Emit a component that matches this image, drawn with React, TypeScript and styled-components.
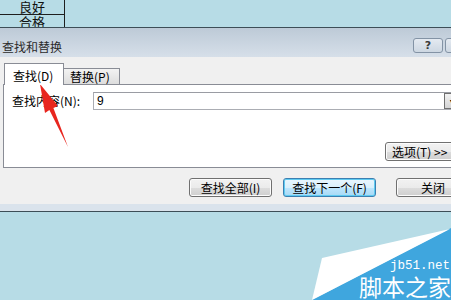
import React from 'react'
import styled, { createGlobalStyle } from 'styled-components'

const GlobalStyle = createGlobalStyle`
  html, body { margin: 0; padding: 0; }
  body { background: #b7dce6; }
`

const cjk = `"Noto Sans CJK SC", "Noto Sans", sans-serif`

const Screen = styled.div`
  position: relative;
  width: 451px;
  height: 300px;
  overflow: hidden;
  background: #b7dce6;
  font-family: ${cjk};
  font-size: 12px;
  color: #000;
`

const Sheet = styled.div`
  width: 64px;
  height: 27px;
  border-right: 1px solid #1e1e1e;
  display: flex;
  flex-direction: column;
`

const Cell = styled.div<{ $h: number; $line?: boolean }>`
  height: ${p => p.$h}px;
  border-bottom: ${p => (p.$line ? '1px solid #1e1e1e' : 'none')};
  overflow: hidden;
  text-align: center;
  font-size: 13px;
  line-height: 14px;
  color: #111;
`

const Dialog = styled.div`
  width: 475px;
  border-top: 1px solid #3d4e57;
  border-bottom: 1px solid #3d4e57;
  display: flex;
  flex-direction: column;
`

const TitleBar = styled.div`
  height: 29px;
  box-sizing: border-box;
  padding: 0 0 4px 2px;
  display: flex;
  align-items: flex-end;
  background: linear-gradient(#bdcad7, #d6dfe9);
  color: #2b2b2b;
`

const Title = styled.span`
  flex: 1;
  line-height: 13px;
`

const CapButton = styled.div<{ $w: number }>`
  width: ${p => p.$w}px;
  height: 15px;
  box-sizing: border-box;
  margin-left: 2px;
  border: 1px solid #8393a5;
  border-radius: 3px;
  background: linear-gradient(#e4eaf1, #cdd7e2);
  display: flex;
  align-items: center;
  justify-content: center;
  font-family: "DejaVu Sans", sans-serif;
  font-weight: bold;
  font-size: 11px;
  color: #3a3a3a;
`

const Body = styled.div`
  height: 147px;
  box-sizing: border-box;
  padding: 6px 0 0 3px;
  background: #f0f0f0;
  display: flex;
  flex-direction: column;
`

const TabRow = styled.div`
  display: flex;
  align-items: flex-end;
  height: 22px;
  margin-bottom: -1px;
  padding-left: 1px;
  position: relative;
  z-index: 1;
`

const Tab = styled.div<{ $active?: boolean }>`
  box-sizing: border-box;
  width: ${p => (p.$active ? 60 : 56)}px;
  height: ${p => (p.$active ? 22 : 17)}px;
  border: 1px solid #898c95;
  border-left-width: ${p => (p.$active ? 1 : 0)}px;
  border-bottom: ${p => (p.$active ? 'none' : '1px solid #898c95')};
  background: ${p => (p.$active ? '#fff' : 'linear-gradient(#f3f3f3, #dddddd)')};
  display: flex;
  align-items: center;
  padding-left: ${p => (p.$active ? 8 : 6)}px;
  padding-top: ${p => (p.$active ? 2 : 0)}px;
  line-height: 12px;
`

const Panel = styled.div`
  width: 467px;
  height: 84px;
  box-sizing: border-box;
  border: 1px solid #898c95;
  background: #fff;
  padding: 7px 8px 0 8px;
  display: flex;
  flex-direction: column;
`

const FieldRow = styled.div`
  display: flex;
  align-items: center;
  height: 18px;
`

const Label = styled.span`
  width: 81px;
  line-height: 12px;
`

const Input = styled.div`
  flex: 1;
  height: 18px;
  box-sizing: border-box;
  border: 1px solid #abadb3;
  border-top-color: #9a9ca3;
  display: flex;
  align-items: center;
  padding-left: 3px;
  font-family: "Liberation Sans", sans-serif;
  font-size: 12px;
`

const InputValue = styled.span`
  flex: 1;
`

const DropButton = styled.div`
  width: 16px;
  height: 16px;
  box-sizing: border-box;
  border: 1px solid #707070;
  background: linear-gradient(#f2f2f2, #d4d4d4);
  display: flex;
  align-items: center;
  justify-content: center;
  font-size: 7px;
  color: #000;
`

const OptionsRow = styled.div`
  display: flex;
  justify-content: flex-end;
  margin-top: 32px;
`

const Button = styled.div<{ $w: number; $default?: boolean }>`
  width: ${p => p.$w}px;
  height: 19px;
  box-sizing: border-box;
  border: 1px solid ${p => (p.$default ? '#3c7fb1' : '#707070')};
  border-radius: 3px;
  background: ${p =>
    p.$default
      ? 'linear-gradient(#eaf6fd 0%, #d9f0fc 50%, #bee6fd 51%, #a7d9f5 100%)'
      : 'linear-gradient(#f2f2f2 0%, #ebebeb 50%, #dddddd 51%, #cfcfcf 100%)'};
  box-shadow: inset 0 0 0 1px ${p => (p.$default ? '#5ecbf1' : '#fcfcfc')};
  display: flex;
  align-items: center;
  justify-content: center;
  line-height: 12px;
  white-space: nowrap;
`

const OptionsButton = styled(Button)`
  justify-content: flex-start;
  padding-left: 6px;
`

const ButtonRow = styled.div`
  display: flex;
  align-items: center;
  margin-top: 10px;
  padding-left: 186px;
  gap: 11px;
`

const CloseButton = styled(Button)`
  margin-left: 9px;
`

const FooterBand = styled.div`
  height: 7px;
  background: #dae3ec;
`

const Overlay = styled.svg`
  position: absolute;
  left: 0;
  top: 0;
  pointer-events: none;
`

const Watermark = styled.div`
  position: absolute;
  right: 0;
  bottom: 0;
  width: 140px;
  height: 72px;
`

const MarkShape = styled.svg`
  position: absolute;
  left: 0;
  top: 0;
`

const MarkUrl = styled.span`
  position: absolute;
  right: 1px;
  top: 33px;
  font-family: "Liberation Mono", monospace;
  font-size: 12.5px;
  line-height: 11px;
  color: #fff;
`

const MarkName = styled.span`
  position: absolute;
  right: 0;
  bottom: 2px;
  font-family: ${cjk};
  font-size: 23px;
  line-height: 23px;
  color: #fff;
`

export default function App() {
  return (
    <Screen>
      <GlobalStyle />
      <Sheet>
        <Cell $h={14} $line>良好</Cell>
        <Cell $h={12}>合格</Cell>
      </Sheet>
      <Dialog>
        <TitleBar>
          <Title>查找和替换</Title>
          <CapButton $w={30}>?</CapButton>
          <CapButton $w={30}></CapButton>
        </TitleBar>
        <Body>
          <TabRow>
            <Tab $active>查找(D)</Tab>
            <Tab>替换(P)</Tab>
          </TabRow>
          <Panel>
            <FieldRow>
              <Label>查找内容(N):</Label>
              <Input>
                <InputValue>9</InputValue>
                <DropButton>▼</DropButton>
              </Input>
            </FieldRow>
            <OptionsRow>
              <OptionsButton $w={76}>选项(T) &gt;&gt;</OptionsButton>
            </OptionsRow>
          </Panel>
          <ButtonRow>
            <Button $w={83}>查找全部(I)</Button>
            <Button $w={93} $default>查找下一个(F)</Button>
            <CloseButton $w={74}>关闭</CloseButton>
          </ButtonRow>
        </Body>
        <FooterBand />
      </Dialog>

      <Overlay width={451} height={300} viewBox="0 0 451 300">
        <polygon
          points="40,84 58,106 53.4,108 68,147 49.4,110 45,113"
          fill="#e8261f"
        />
      </Overlay>

      <Watermark>
        <MarkShape width={140} height={72} viewBox="0 0 140 72">
          <polygon points="140,0 140,72 1,72" fill="#3fa6de" />
          <polygon points="11,30 139,1 1,72" fill="#ffffff" />
        </MarkShape>
        <MarkUrl>jb51.net</MarkUrl>
        <MarkName>脚本之家</MarkName>
      </Watermark>
    </Screen>
  )
}
